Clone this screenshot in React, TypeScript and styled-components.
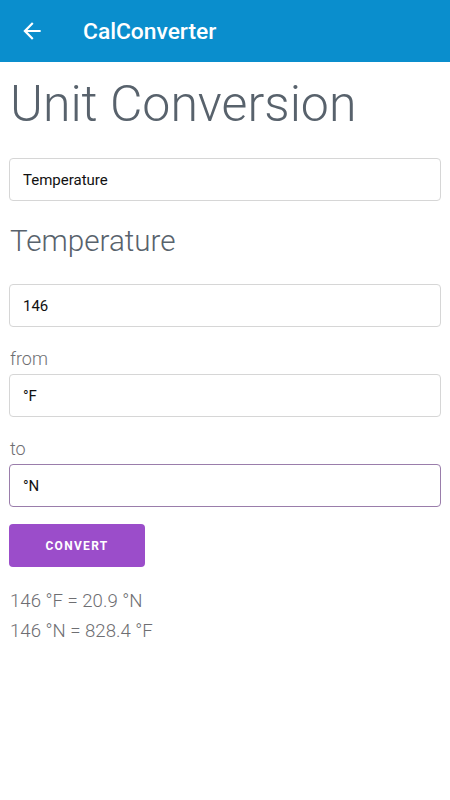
import React from "react";
import styled, { createGlobalStyle } from "styled-components";

const Global = createGlobalStyle`
  html, body { margin: 0; padding: 0; background: #fff; }
  body { font-family: Roboto, "Noto Sans", sans-serif; width: 450px; height: 800px; overflow: hidden; }
  * { box-sizing: border-box; }
`;

const Page = styled.div`
  width: 450px;
  min-height: 800px;
  background: #fff;
  display: flex;
  flex-direction: column;
`;

const AppBar = styled.header`
  height: 62px;
  background: #0a8ecd;
  display: flex;
  align-items: center;
  padding-left: 19px;
  color: #fff;
`;

const BackButton = styled.div`
  width: 26px;
  height: 26px;
  display: flex;
  align-items: center;
  justify-content: center;
  margin-right: 38px;
`;

const Title = styled.h1`
  margin: 0;
  font-family: Roboto, sans-serif;
  font-weight: 500;
  font-size: 22.8px;
  color: #fff;
`;

const Content = styled.main`
  display: flex;
  flex-direction: column;
  padding: 0 9px;
`;

const Heading = styled.h2`
  margin: 10px 0 0 1px;
  font-weight: 300;
  font-size: 50px;
  line-height: 64px;
  color: #58626c;
`;

const SubHeading = styled.h3`
  margin: 22px 0 0 1px;
  font-weight: 300;
  font-size: 29.6px;
  line-height: 36px;
  color: #58626c;
`;

const Field = styled.div<{ $focused?: boolean; $mt: number }>`
  margin-top: ${(p) => p.$mt}px;
  height: 43px;
  border: 1px solid ${(p) => (p.$focused ? "#9a7dab" : "#d6d6d6")};
  border-radius: 4px;
  display: flex;
  align-items: center;
  padding-left: 13px;
  font-family: Roboto, sans-serif;
  font-weight: 400;
  font-size: 15px;
  color: #111;
`;

const Label = styled.div<{ $mt: number }>`
  margin: ${(p) => p.$mt}px 0 0 1px;
  font-weight: 300;
  font-size: 18px;
  line-height: 22px;
  color: #6e6e72;
`;

const Button = styled.button`
  margin-top: 17px;
  align-self: flex-start;
  width: 136px;
  height: 43px;
  border: none;
  border-radius: 4px;
  background: #9b4dca;
  color: #fff;
  font-family: Roboto, sans-serif;
  font-weight: 700;
  font-size: 12px;
  letter-spacing: 1.3px;
  text-transform: uppercase;
  padding: 0;
`;

const Results = styled.div`
  margin: 19px 0 0 1px;
  font-weight: 300;
  font-size: 18.6px;
  line-height: 30px;
  color: #6e6e72;
`;

export default function App() {
  return (
    <>
      <Global />
      <Page>
        <AppBar>
          <BackButton>
            <svg width="26" height="26" viewBox="0 0 24 24">
              <path fill="#fff" d="M20 11H7.83l5.59-5.59L12 4l-8 8 8 8 1.41-1.41L7.83 13H20v-2z" />
            </svg>
          </BackButton>
          <Title>CalConverter</Title>
        </AppBar>
        <Content>
          <Heading>Unit Conversion</Heading>
          <Field $mt={22}>Temperature</Field>
          <SubHeading>Temperature</SubHeading>
          <Field $mt={25}>146</Field>
          <Label $mt={21}>from</Label>
          <Field $mt={4}>°F</Field>
          <Label $mt={21}>to</Label>
          <Field $mt={4} $focused>°N</Field>
          <Button>Convert</Button>
          <Results>
            <div>146 °F = 20.9 °N</div>
            <div>146 °N = 828.4 °F</div>
          </Results>
        </Content>
      </Page>
    </>
  );
}
